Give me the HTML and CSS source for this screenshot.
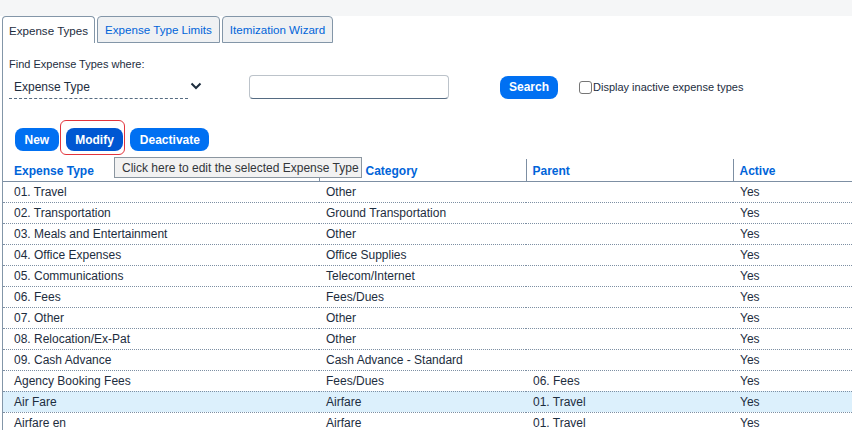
FILE: index.html
```html
<!DOCTYPE html>
<html>
<head>
<meta charset="utf-8">
<link rel="stylesheet" href="styles.css">
</head>
<body>
<div class="topbar"></div>
<div class="tabs">
  <div class="tab active">Expense Types</div>
  <div class="tab">Expense Type Limits</div>
  <div class="tab">Itemization Wizard</div>
</div>
<div class="panel">
  <div class="find-label">Find Expense Types where:</div>
  <div class="find-row">
    <div class="select">Expense Type</div>
    <svg class="chev" width="12" height="8" viewBox="0 0 12 8"><path d="M1.5 1.5 L6 6 L10.5 1.5" fill="none" stroke="#1d2d3e" stroke-width="2"/></svg>
    <div class="text-input"></div>
    <button class="btn search">Search</button>
    <label class="chk"><span class="box"></span>Display inactive expense types</label>
  </div>
  <div class="actions">
    <button class="btn">New</button>
    <span class="focus-wrap"><button class="btn pressed">Modify</button></span>
    <button class="btn">Deactivate</button>
    <div class="tooltip">Click here to edit the selected Expense Type</div>
  </div>
  <table class="grid">
    <colgroup><col class="c1"><col class="c2"><col class="c3"><col class="c4"></colgroup>
    <thead>
      <tr><th>Expense Type</th><th class="cat">Category</th><th>Parent</th><th>Active</th></tr>
    </thead>
    <tbody>
      <tr><td>01. Travel</td><td>Other</td><td></td><td>Yes</td></tr>
      <tr><td>02. Transportation</td><td>Ground Transportation</td><td></td><td>Yes</td></tr>
      <tr><td>03. Meals and Entertainment</td><td>Other</td><td></td><td>Yes</td></tr>
      <tr><td>04. Office Expenses</td><td>Office Supplies</td><td></td><td>Yes</td></tr>
      <tr><td>05. Communications</td><td>Telecom/Internet</td><td></td><td>Yes</td></tr>
      <tr><td>06. Fees</td><td>Fees/Dues</td><td></td><td>Yes</td></tr>
      <tr><td>07. Other</td><td>Other</td><td></td><td>Yes</td></tr>
      <tr><td>08. Relocation/Ex-Pat</td><td>Other</td><td></td><td>Yes</td></tr>
      <tr><td>09. Cash Advance</td><td>Cash Advance - Standard</td><td></td><td>Yes</td></tr>
      <tr><td>Agency Booking Fees</td><td>Fees/Dues</td><td>06. Fees</td><td>Yes</td></tr>
      <tr class="sel"><td>Air Fare</td><td>Airfare</td><td>01. Travel</td><td>Yes</td></tr>
      <tr><td>Airfare en</td><td>Airfare</td><td>01. Travel</td><td>Yes</td></tr>
    </tbody>
  </table>
</div>
</body>
</html>
```
FILE: styles.css
```css
* { box-sizing: border-box; }
body {
  margin: 0;
  font-family: "Liberation Sans", Arial, sans-serif;
  color: #1d2d3e;
  background: #fff;
  overflow: hidden;
  height: 430px;
}
.topbar {
  height: 16px;
  background: #f5f6f7;
}
.tabs {
  display: flex;
  gap: 2px;
  padding-left: 2px;
  height: 27px;
}
.tab {
  height: 27px;
  padding: 0 7px;
  display: flex;
  align-items: center;
  font-size: 11.6px;
  color: #0064d9;
  background: #eff1f3;
  border: 1px solid #8396a8;
  border-radius: 4px 4px 0 0;
}
.tab.active {
  color: #1d2d3e;
  background: #fff;
  border-bottom: none;
  padding: 0 6px;
}
.panel {
  margin-left: 2px;
  border-left: 1px solid #8396a8;
  padding-top: 14px;
  height: 400px;
}
.find-label {
  font-size: 11px;
  line-height: 14px;
  padding-left: 6px;
}
.find-row {
  margin-top: 4px;
  display: flex;
  align-items: center;
  height: 24px;
}
.select {
  margin-left: 6px;
  width: 179px;
  height: 24px;
  padding: 5px 0 0 5px;
  font-size: 12px;
  border-bottom: 1px dashed #556b82;
}
.chev {
  margin-left: 2px;
  margin-top: -3px;
}
.text-input {
  margin-left: 47px;
  width: 200px;
  height: 24px;
  border: 1px solid #bcc3ca;
  border-bottom-color: #556b82;
  border-radius: 4px;
}
.btn {
  height: 23px;
  padding: 0 9.5px;
  border: none;
  border-radius: 8px;
  background: #0070f2;
  color: #fff;
  font-family: "Liberation Sans", Arial, sans-serif;
  font-weight: bold;
  font-size: 12px;
}
.btn.search {
  margin-left: 51px;
  width: 58px;
  padding: 0;
}
.chk {
  margin-left: 21px;
  display: flex;
  align-items: center;
  font-size: 11px;
}
.box {
  width: 13px;
  height: 13px;
  border: 1px solid #767676;
  border-radius: 3px;
  margin-right: 1px;
}
.actions {
  position: relative;
  margin-top: 29px;
  padding-left: 12px;
  display: flex;
  gap: 7px;
  height: 23px;
}
.btn.pressed {
  background: #0057d2;
}
.focus-wrap {
  position: relative;
  display: flex;
}
.focus-wrap::after {
  content: "";
  position: absolute;
  left: -6px;
  right: -2px;
  top: -8px;
  bottom: -4px;
  border: 1.5px solid #e3343c;
  border-radius: 6px;
}
.tooltip {
  position: absolute;
  left: 111px;
  top: 29px;
  width: 248px;
  height: 21px;
  padding: 3px 0 0 7px;
  background: #f2f2f2;
  border: 1px solid #8b96a0;
  font-size: 12px;
  color: #32363a;
  z-index: 2;
  white-space: nowrap;
}
.grid {
  margin-top: 8px;
  width: 849px;
  table-layout: fixed;
  border-collapse: collapse;
  font-size: 12px;
}
.c1 { width: 316px; }
.c2 { width: 207px; }
.c3 { width: 207px; }
.c4 { width: 119px; }
.grid th {
  height: 22px;
  text-align: left;
  color: #0064d9;
  font-weight: bold;
  padding: 2px 0 0 6px;
  border-bottom: 1px solid #7d8fa3;
  border-left: 1px solid #7d8fa3;
}
.grid th:first-child {
  border-left: none;
  padding-left: 11px;
}
.grid th.cat { padding-left: 46px; }
.grid td {
  height: 21px;
  padding: 0 0 0 7px;
  border-bottom: 1px dotted #7d8fa3;
  white-space: nowrap;
}
.grid td:first-child { padding-left: 11px; }
.grid tr.sel td { background: #dcf0fc; }
```
